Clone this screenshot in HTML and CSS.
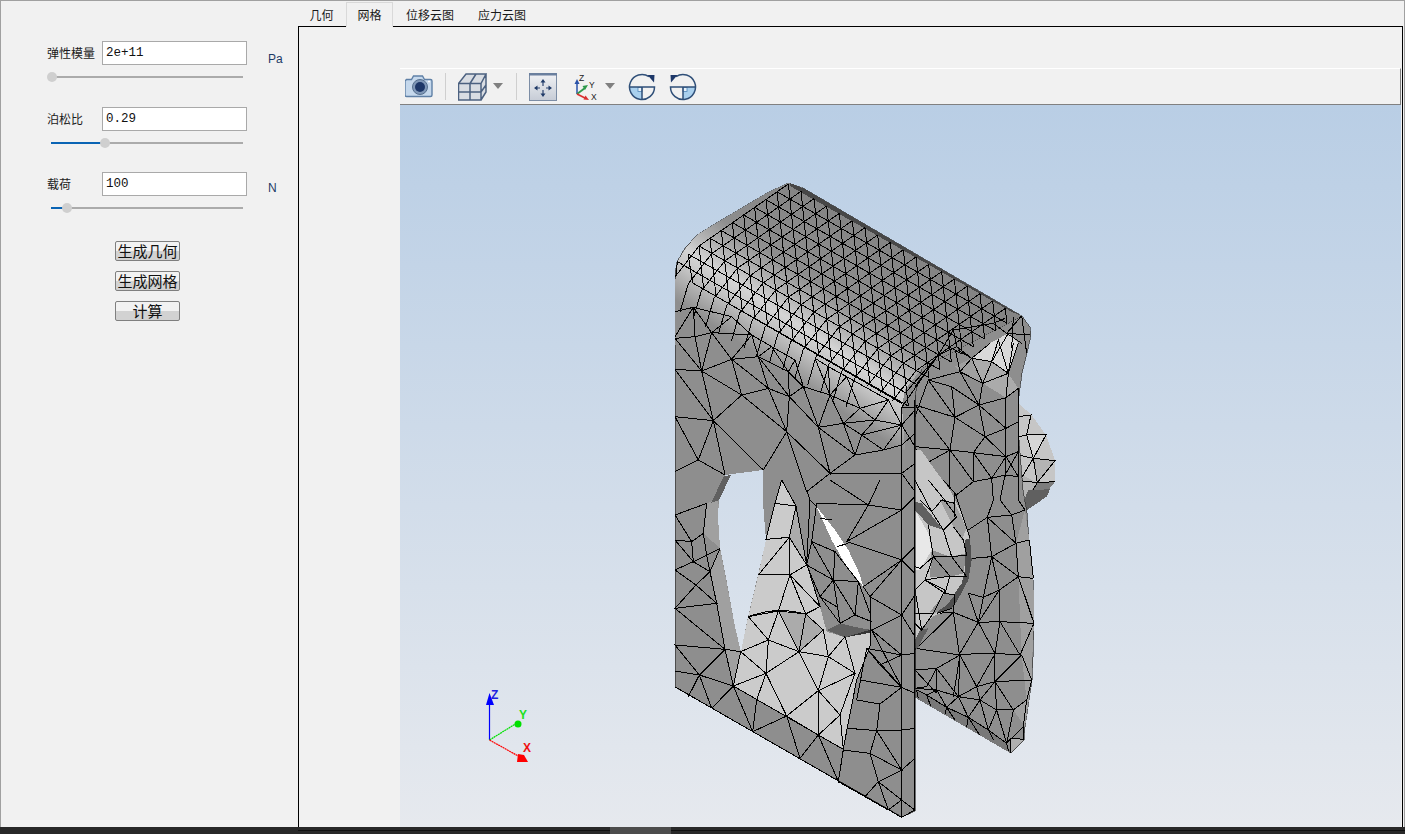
FILE: index.html
```html
<!DOCTYPE html>
<html lang="zh">
<head>
<meta charset="utf-8">
<title>有限元分析</title>
<link rel="stylesheet" href="styles.css">
</head>
<body>
<div class="app">
  <div class="main">
    <aside class="sidebar">
      <div class="fields">
        <div class="field">
          <label class="field-label">弹性模量</label>
          <input class="field-input" value="2e+11">
          <span class="spacer"></span>
          <span class="unit-text unit-text-low">Pa</span>
          <div class="slider"><span class="slider-fill" style="width:1px"></span><span class="slider-thumb"></span><span class="slider-rest"></span></div>
        </div>
        <div class="field">
          <label class="field-label">泊松比</label>
          <input class="field-input" value="0.29">
          <span class="spacer"></span>
          <span class="unit-text"></span>
          <div class="slider"><span class="slider-fill" style="width:54px"></span><span class="slider-thumb"></span><span class="slider-rest"></span></div>
        </div>
        <div class="field">
          <label class="field-label">载荷</label>
          <input class="field-input" value="100">
          <span class="spacer"></span>
          <span class="unit-text">N</span>
          <div class="slider"><span class="slider-fill" style="width:16px"></span><span class="slider-thumb"></span><span class="slider-rest"></span></div>
        </div>
      </div>
      <div class="actions">
        <button class="action">生成几何</button>
        <button class="action">生成网格</button>
        <button class="action">计算</button>
      </div>
    </aside>
    <section class="workspace">
      <nav class="tabs">
        <span class="tab">几何</span>
        <span class="tab tab-active">网格</span>
        <span class="tab">位移云图</span>
        <span class="tab">应力云图</span>
      </nav>
      <div class="pane">
        <div class="viewer">
          <div class="toolbar">
            <svg class="tool tool-camera" width="28" height="24" viewBox="405 75 28 24">
              <path d="M406.500 79.500h5l2-3.500h9l2 3.500h6a1.500 1.500 0 0 1 1.500 1.500v14a1.500 1.500 0 0 1-1.500 1.500h-24a1.500 1.500 0 0 1-1.500-1.500v-14z" fill="#c5d8ec" stroke="#5f80a6" stroke-width="1.400"/>
              <circle cx="420" cy="87" r="7.500" fill="#8098b8" stroke="#56708f"/>
              <circle cx="420" cy="87" r="5" fill="#1d3768"/>
              <circle cx="429" cy="81.500" r="1" fill="#fff"/>
            </svg>
            <span class="tool-sep"></span>
            <svg class="tool tool-cube" width="29" height="28" viewBox="458 73 29 28">
              <path d="M466 74h20v18l-5 8h-22.500v-17z" fill="#d9dde3"/>
              <path d="M458.500 83.500h22.500v16.500h-22.500zM458.500 83.500l7.500-9.500h20l-5 9.500M481 100l5-8v-18M470 83.500v16.500M458.500 92h22.500l5-7M476 74l-6 9.500" fill="none" stroke="#4c6180" stroke-width="1.500"/>
            </svg>
            <span class="caret"></span>
            <span class="tool-sep tool-sep-b"></span>
            <svg class="tool tool-fit" width="28" height="28" viewBox="529 72 28 28">
              <defs><linearGradient id="fitg" x1="0" y1="0" x2="0" y2="1"><stop offset="0" stop-color="#f1f2f5"/><stop offset="1" stop-color="#c6ccd6"/></linearGradient></defs>
              <rect x="529.500" y="72.500" width="27" height="27" fill="url(#fitg)" stroke="#7c8da5"/>
              <rect x="529" y="72" width="28" height="2.500" fill="#6a7f9e"/>
              <path d="M543 81v4M543 89v4M536 87h4M546 87h4" stroke="#2c4470" stroke-width="1.200"/>
              <path d="M543 78l-2.500 3.500h5zM543 96l-2.500-3.500h5zM534 87l3.500-2.500v5zM552 87l-3.500-2.500v5z" fill="#1f3a68"/>
            </svg>
            <svg class="tool tool-axis" width="26" height="28" viewBox="573 72 26 28">
              <path d="M577 93v-13" stroke="#2a52a8" stroke-width="1.500"/>
              <path d="M577 78l-2.500 5h5z" fill="#2a52a8"/>
              <path d="M577 93l8-6" stroke="#2e9a4c" stroke-width="1.800"/>
              <path d="M588 84l-5.500 1 2.500 4z" fill="#2e9a4c"/>
              <path d="M577 93l8 4" stroke="#d93030" stroke-width="1.800"/>
              <path d="M589 99l-5.500-.500 2-4z" fill="#d93030"/>
              <text class="axis-mini" x="579" y="79.500">Z</text>
              <text class="axis-mini" x="589" y="87">Y</text>
              <text class="axis-mini" x="591" y="98.500">X</text>
            </svg>
            <span class="caret caret-b"></span>
            <svg class="tool tool-rot" width="28" height="28" viewBox="629 72 28 28">
              <path d="M643 86H630.500A12.500 12.500 0 0 0 643 98.500Z" fill="#a9d0ee"/>
              <rect x="639" y="86.500" width="4" height="4" fill="#e8f2fa" stroke="#4f86b8" stroke-width=".8"/>
              <path d="M650 75.700A12.500 12.500 0 1 0 655.500 86H630.500M643 86V98.500" fill="none" stroke="#2f4f78" stroke-width="1.500"/>
              <path d="M648.500 74L655.500 74L655 81.500Z" fill="#1d3768"/>
            </svg>
            <svg class="tool tool-rot-b" width="28" height="28" viewBox="670 72 28 28">
              <path d="M684 86H696.500A12.500 12.500 0 0 1 684 98.500Z" fill="#a9d0ee"/>
              <rect x="684" y="86.500" width="4" height="4" fill="#e8f2fa" stroke="#4f86b8" stroke-width=".8"/>
              <path d="M677 75.700A12.500 12.500 0 1 1 671.500 86H696.500M684 86V98.500" fill="none" stroke="#2f4f78" stroke-width="1.500"/>
              <path d="M678.500 74L671.500 74L672 81.500Z" fill="#1d3768"/>
            </svg>
          </div>
          <div class="canvas">
            <svg class="scene" viewBox="400 105 1001 722" preserveAspectRatio="none">
              <defs>
                <linearGradient id="bg" gradientUnits="userSpaceOnUse" x1="0" y1="105" x2="0" y2="827">
                  <stop offset="0" stop-color="#b9cee5"/>
                  <stop offset="1" stop-color="#e6e9ee"/>
                </linearGradient>
                <linearGradient id="band" gradientUnits="userSpaceOnUse" x1="788" y1="183" x2="699" y2="316">
                  <stop offset="0" stop-color="#848484"/>
                  <stop offset=".42" stop-color="#8e8e8e"/>
                  <stop offset=".58" stop-color="#b4b4b4"/>
                  <stop offset=".7" stop-color="#d4d4d4"/>
                  <stop offset=".8" stop-color="#c4c4c4"/>
                  <stop offset="1" stop-color="#8e8e8e"/>
                </linearGradient>
              </defs>

              <!-- back bulge -->
              <g transform="translate(900 300) scale(.33333)">
                <path class="f-light" d="M355 310L395 345L438 405L465 480L465 545L430 590L370 600L355 560Z"/>
                <path class="f-pale" d="M380 405L438 405L400 475Z"/>
                <path class="f-mid" d="M400 475L465 482L412 548ZM355 520L412 548L375 598Z"/>
                <path class="f-dim" d="M412 548L465 545L430 590L375 598Z"/>
                <path class="mesh" d="M355 350L393 345L380 405L438 405L400 475L465 482L412 548L465 545M380 405L400 475L355 465M393 345L380 405L355 410M400 475L412 548L360 542L400 475M412 548L380 600"/>
              </g>
              <g transform="translate(900 480) scale(.33333)">
                <path class="f-dark" d="M450 28L440 50L378 92L368 70L385 30Z"/>
              </g>

              <!-- back plate -->
              <path class="f-base edge" d="M905 372L1022 316L1030 327L1031 335L1027 353L1022 373L1018 403L1019 440L1023 490L1027 513L1029 540L1033 580L1034 623L1033 657L1032 680L1025 727L1024 740L1011 753L915 697L915 395Z"/>
              <g transform="translate(900 480) scale(.33333)">
                <path class="f-mid2" d="M375 90L388 180L400 295L402 430L395 540L365 525L355 290L348 190Z"/>
                <path class="mesh" d="M280 60L262 112M300 60L335 105M355 60L375 90M262 112L335 105L375 90M262 112L205 150M262 112L275 230M262 112L348 190L388 180M275 230L348 190M335 105L348 190M275 230L355 290L400 295M348 190L355 290M388 180L400 295M275 230L298 330L355 290M355 290L402 430M298 330L235 427L300 425L402 430M298 330L300 425M250 352L235 427M250 352L298 330M250 352L205 340M205 340L235 427M235 427L178 523L285 520L360 525L395 530M235 427L285 520M300 425L285 520M300 425L360 525M402 430L360 525M235 427L160 397L178 523M160 397L45 510M160 397L110 400M275 230L215 235M275 230L250 352"/>
              </g>
              <g transform="translate(660 480) scale(.33333)">
                <path class="f-mid2" d="M1085 525L1120 435L1115 600L1095 740L1060 690L1100 660Z"/>
                <path class="f-shade" d="M765 625L800 645L860 682L925 712L985 750L1040 790L1052 820L765 651Z"/>
                <path class="f-tip" d="M1052 775L1092 778L1052 820Z"/>
                <path class="mesh" d="M900 525L830 565M900 525L765 505M1085 525L1115 600M1005 522L1005 605M1085 525L1005 605L1115 600M900 525L950 620M900 525L895 650M900 525L880 650M830 565L895 650M830 565L830 640M830 565L765 570L830 640M830 565L800 620M895 650L950 620L1005 605M1005 522L950 620L960 660L895 650M960 660L1005 605L1060 690M770 630L800 645L830 630L860 682L895 650L925 712L960 660L985 750L1010 690L1040 790L1060 690L1100 660L1115 600M765 625L830 630L895 650L960 660L1010 690L1060 690M1005 605L1010 690M800 645L860 682L925 712L985 750L1040 790M800 645L812 678M860 682L855 702M860 682L885 720M925 712L920 740M925 712L958 764M985 750L1000 780M1040 790L1045 812M1040 790L1052 775L1092 778M1052 775L1052 820M1100 660L1090 740L1040 790M1090 740L1092 778M765 625L800 620M770 630L775 655"/>
              </g>

              <!-- flange -->
              <g transform="translate(900 300) scale(.33333)">
                <path class="f-vivid" d="M215 175L270 130L325 100L355 130L325 220L275 185Z"/>
                <path class="f-soft" d="M215 175L275 185L325 220L355 265L318 293L248 250Z"/>
                <path class="f-mid2" d="M165 200L215 175L248 250L180 215Z"/>
                <path class="mesh" d="M215 175L275 185L325 220M215 175L270 130M275 185L295 120L325 220M275 185L325 100M325 220L355 130M325 220L340 130M215 175L248 250L325 220M248 250L275 185M180 215L215 175M180 215L248 250M248 250L237 315M180 215L237 315M180 215L165 145M165 145L215 175M45 315L165 352L237 315L318 293L355 265M318 293L325 220M318 293L318 530M237 315L255 410L318 385L318 293M165 352L255 410L220 458L150 450L165 352M45 315L150 450M45 350L85 240L165 352M85 240L155 260L165 352M85 240L180 215M155 260L237 315M237 315L318 385M255 410L318 470L275 535L220 458M220 458L318 470M150 450L45 440M150 450L220 545M220 458L220 545L275 535L315 525L355 455L318 470M318 385L355 365M318 470L355 530M315 525L355 530M355 265L355 600M150 450L150 600M220 545L150 600M275 535L280 600M315 525L300 600M45 440L70 495M70 495L150 450"/>
              </g>

              <!-- interior seen through the back plate opening -->
              <path class="f-light" d="M915 450L921 450L935 470L950 490L960 510L967 527L971 550L968 577L957 600L943 612L932 617L920 630L915 643Z"/>
              <g transform="translate(900 480) scale(.33333)">
                <path class="f-white" d="M45 90L85 160L95 210L60 270L45 270Z"/>
                <path class="f-dark" d="M45 65L65 70L130 150L85 135L45 90Z"/>
                <path class="f-mid2" d="M120 60L165 70L200 145L185 180L160 140Z"/>
                <path class="f-base" d="M95 210L150 230L200 220L190 280L150 290L90 290Z"/>
                <path class="f-darker" d="M195 180L210 175L215 240L205 300L170 365L155 385L110 400L150 360L185 310L195 270Z"/>
                <path class="f-dark" d="M45 480L60 450L85 445L50 510Z"/>
                <path class="f-base" d="M135 340L165 345L140 375L105 400L90 395Z"/>
                <path class="mesh" d="M85 0L130 55L95 95L45 0M130 55L170 110L130 150L95 95M130 0L165 40L200 145L210 175M95 95L60 60M120 60L165 70M165 40L165 110M130 150L155 230L100 230M85 135L100 230L60 265L45 260M155 230L200 225L190 180L160 140M100 230L75 300L45 330M100 230L150 288L75 300M150 288L200 290L155 230M150 288L135 340L75 300M75 300L135 330L100 400M135 340L165 345L160 397M45 400L100 400L65 450L45 430M45 330L65 450M155 385L110 400"/>
              </g>

              <!-- front plate -->
              <path class="f-base edge" d="M675 687L675 273L677 262L685 248L697 235L713 225L767 193L788 183L803 188L1022 316L922 368L915 395L915 811L902 817Z"/>
              <path class="f-band" d="M675 285L677 262L686 248L697 235L713 225L767 193L788 183L803 188L1022 316L922 368L905 390L902 407L905 450L840 450L675 345Z"/>
              <path class="f-rim" d="M790 183L805 189L1022 316L1012 312L790 186Z"/>

              <!-- top surface mesh -->
              <g transform="translate(660 170) scale(.33333)">
                <path class="mesh" d="M351 65L1041 460M318 89L1008 483M284 112L974 507M251 135L940 530M217 158L907 553M184 182L874 576M150 205L840 599M117 228L807 623M84 252L774 646M52 275L740 670M100 340L745 708M170 380L725 700"/>
                <path class="mesh" d="M385 42L117 228L47 318M423 64L155 251L85 341L60 426M462 86L194 273L124 363L99 448M500 108L232 295L162 385L137 470M538 130L270 317L200 407L175 492M577 152L309 339L239 429L214 514M615 173L347 360L277 450L252 535M653 195L385 382L315 472L290 557M691 217L423 404L353 494L328 579M730 239L462 426L392 516L367 601M768 261L500 448L430 538L405 623M806 283L538 470L468 560L443 645M845 305L577 492L507 582L482 667M883 327L615 514L545 604L520 689M921 349L653 536L583 626L558 711M960 371L692 558L622 648M998 393L730 580L660 670M1036 415L768 602L698 692"/>
                <path class="mesh" d="M150 205L168 378M117 228L131 357M84 252L98 339M52 275L48 320M184 182L194 272M217 158L231 294M251 135L270 316M284 112L308 338M318 89L347 360M351 65L385 381M385 42L423 404M423 64L461 425M462 86L500 448M500 108L538 470M538 130L576 491M577 152L615 513M615 173L653 534M653 195L691 556M691 217L729 578M730 239L768 600M768 261L806 622M806 283L840 599M845 305L874 576M883 327L907 553M921 349L940 530M960 371L974 507M998 393L1008 483M1036 415L1041 460"/>
                <path class="mesh" d="M194 272L209 402M232 294L247 424M270 316L285 446M308 338L323 468M347 360L362 490M385 382L400 512M423 404L438 534M461 425L476 555M500 448L515 578M538 470L553 600M576 491L591 621M615 513L630 643M653 534L668 664M691 556L706 686M730 578L745 708"/>
                <path class="mesh" d="M1085 437L1040 490L1060 470M1040 490L1110 495M1060 440L1055 535M1085 437L1100 550M1040 490L1085 520M1000 460L1040 490M1000 460L1035 445M1000 460L880 480M880 480L835 555M880 480L890 530M835 555L890 530M890 530L935 565M835 555L765 650M835 555L735 670M725 712L835 555M725 712L765 712"/>
                <path class="mesh" d="M725 712L725 990M765 690L765 990M725 765L765 720M725 765L765 830M725 825L765 790M725 910L765 880M725 910L765 965"/>
                <path class="mesh" d="M100 412L155 488L105 500L100 412M100 412L45 425M45 505L105 500L125 603M45 505L125 603M45 598L125 603M155 488L125 603M155 488L215 568L125 603M125 603L245 675L215 568M125 603L160 752L245 675M45 598L160 752M45 740L160 752L115 870L45 740M115 870L45 905M115 870L195 915M160 752L195 915M160 752L310 900M245 675L380 785M380 785L310 900M245 675L325 655L380 785M325 655L388 680L380 785M215 568L325 655M295 560L325 655M295 560L388 680M215 568L295 560L275 495L215 568M155 488L215 440L275 495L155 488M100 412L215 440M275 495L335 530L295 560M335 530L385 605L295 560M385 605L388 680M385 605L430 650L388 680M430 650L475 772L388 680M430 650L510 675L475 772M510 675L550 760L475 772M550 760L645 750M510 675L600 715L550 760M600 715L645 750L685 690L600 715M685 690L725 765L645 750L605 795L550 760M605 795L725 765M605 795L585 855M605 795L670 840L725 825M670 840L585 855M725 765L670 840M585 855L510 910M550 760L585 855M475 772L585 855M475 772L510 910L380 785M380 785L440 965L510 910M510 910L725 910M335 530L405 570L430 650M405 570L385 605M465 565L505 590L510 675L465 565M505 590L560 620L600 715M560 620L510 675M560 620L685 690M45 500L100 412"/>
              </g>

              <!-- front plate lower: light interior, hole -->
              <g transform="translate(660 480) scale(.33333)">
                <path class="f-light2" d="M365 0L408 78L440 250L480 380L500 455L555 472L632 455L630 500L590 600L550 805L475 765L220 618L242 515L265 410L295 285L318 180L345 70Z"/>
                <path class="f-soft" d="M408 78L440 250L388 172Z"/>
                <path class="f-mid2" d="M140 70L175 55L180 205L130 160Z"/>
                <path class="f-mid2" d="M180 205L222 425L170 370L150 275Z"/>
                <path class="f-mid2" d="M170 370L222 425L242 515L195 508Z"/>
                <path class="f-mid2" d="M195 508L242 515L220 618Z"/>
                <path class="f-soft" d="M355 393L437 402L490 450L417 515Z"/>
              </g>
              <path class="f-hole" d="M725 475L763 470L763 503L766 540L758 575L748 617L741 652L735 627L727 583L720 547L718 517L719 500L723 490Z"/>
              <path class="f-dark" d="M711 503L724 476L731 475L719 500Z"/>
              <g transform="translate(660 480) scale(.33333)">
                <path class="f-paper" d="M470 80L525 150L565 210L598 280L610 320L560 260L515 180Z"/>
                <path class="f-dark" d="M500 450L540 430L580 440L635 450L555 472Z"/>
                <path class="f-black" d="M555 472L635 448L632 458Z"/>
                <path class="mesh" d="M140 70L45 105L95 185L130 160L140 70M45 180L95 185L100 245L45 180M100 245L140 225L130 160M140 225L150 275L100 245L45 270L108 315L150 275M108 315L45 385L170 370L108 315M150 275L170 370M150 275L180 205M140 225L180 205M45 385L195 508L170 370M195 508L45 495L118 585L195 508M118 585L45 573M118 585L220 618L155 685M118 585L155 685M118 585L85 650M195 508L220 618M195 508L242 515M278 755L220 618M290 660L278 755L380 708L420 835L475 765L535 905L550 808M380 708L475 765"/>
                <path class="mesh" d="M408 78L345 70L318 178L388 172L295 285L390 285L355 393L265 410L325 480L355 393L417 515L325 480L242 515L318 580L325 480M417 515L318 580L220 618M318 580L290 660M318 580L380 708M417 515L475 632L505 530L417 515L490 450L505 530L555 470L585 580L505 530M475 632L585 580L540 705L475 765L475 632L380 708M475 632L540 705L550 808M408 78L388 172L440 255L408 78M390 285L440 255M388 172L390 285M390 285L437 402L355 393M437 402L417 515M437 402L480 380L390 285M437 402L490 450M220 618L475 765L550 808M242 515L220 618M365 0L408 78M345 70L365 0M265 410C320 390 370 385 437 402"/>
                <path class="mesh" d="M455 185L440 255L520 300L455 185L525 215L520 300L480 350L440 255M520 300L595 305L585 405L520 300M595 305L630 400M585 405L635 425M585 405L540 430L480 350L530 380M520 300L540 430M455 185L470 70M440 30L450 60L440 250L480 380M480 115L515 120M530 200L565 190M450 60L470 80M525 215L595 305"/>
                <path class="mesh" d="M625 75L725 90L560 185L725 240L610 320M625 75L560 185M625 75L660 0M625 75L510 0M625 75L470 70M725 240L630 350L725 405L635 450L725 622L620 505L725 525L660 555L725 622M620 505L660 555M600 600L725 622L660 672L590 660L620 505M660 672L650 752L725 750M650 752L725 870L630 820L550 810L535 905L615 950L655 905L630 820M565 745L650 752L630 820M725 870L655 905L685 990M655 905L725 960L685 990L615 950M725 525L635 450M630 500L590 600L550 805M610 320L630 350L632 455L630 500"/>
                <path class="mesh" d="M725 0L725 1012M765 0L765 990M725 90L765 50M725 240L765 200M725 240L765 280M725 405L765 345M725 405L765 470M725 525L765 520M725 622L765 640M725 750L765 745M725 870L765 835M725 960L765 990M725 1012L765 990M44 620L725 1012"/>
              </g>

              <!-- orientation triad -->
              <g class="triad">
                <path class="triad-z" d="M489.500 740V700"/>
                <path class="triad-zh" d="M489.500 693L486 705H494Z"/>
                <text class="triad-label triad-lz" x="491" y="699">Z</text>
                <path class="triad-y" d="M489.500 740L517 723"/>
                <circle class="triad-yh" cx="518" cy="724" r="3.500"/>
                <text class="triad-label triad-ly" x="519" y="719">Y</text>
                <path class="triad-x" d="M489.500 740L520 757"/>
                <path class="triad-xh" d="M528 762L517 762L518 754L524 755Z"/>
                <text class="triad-label triad-lx" x="523" y="752">X</text>
              </g>
            </svg>
          </div>
        </div>
      </div>
    </section>
  </div>
  <div class="statusbar"><span class="statusbar-thumb"></span></div>
</div>
</body>
</html>
```

FILE: styles.css
```css
* { box-sizing: border-box; }
html, body { margin: 0; padding: 0; height: 100%; overflow: hidden; }
body { background: #f1f1f1; font-family: "Noto Sans CJK SC", "Liberation Sans", sans-serif; font-size: 12px; color: #1a1a1a; }

.app { height: 834px; width: 1405px; display: flex; flex-direction: column; border-top: 1px solid #a0a0a0; border-left: 1px solid #a0a0a0; border-right: 1px solid #a0a0a0; }
.main { flex: 1; display: flex; min-height: 0; }

.sidebar { width: 297px; flex: none; padding: 40px 0 0 46px; display: flex; flex-direction: column; }
.fields { display: flex; flex-direction: column; gap: 24.5px; width: 240px; }
.field { display: grid; grid-template-columns: 55px 145px 21px auto; grid-template-rows: 24px 10px; row-gap: 7px; align-items: center; }
.field-label { line-height: 24px; white-space: nowrap; font-size: 12px; }
.field-input { width: 145px; height: 24px; border: 1px solid #a9a9a9; background: #fff; padding: 0 3px; font-family: "Liberation Mono", monospace; font-size: 12.5px; color: #111; outline: none; }
.unit-text { font-family: "Liberation Sans", sans-serif; font-size: 12px; line-height: 14px; color: #1d3a66; margin-top: 8px; white-space: nowrap; }
.unit-text-low { margin-top: 11px; }

.slider { grid-column: 1 / span 2; display: flex; align-items: center; height: 10px; margin-left: 4px; width: 192px; }
.slider-fill { height: 2px; background: #0a64b4; flex: none; }
.slider-thumb { width: 10px; height: 10px; border-radius: 50%; background: #cfcfcf; flex: none; margin-left: -5px; margin-right: -5px; position: relative; }
.slider-rest { flex: 1; height: 2px; background: #ababab; }

.actions { margin: 28px 0 0 68px; display: flex; flex-direction: column; gap: 10px; align-items: flex-start; }
.action { width: 65px; height: 20px; padding: 0; border: 1px solid #7f7f7f; border-radius: 2px; background: linear-gradient(#f2f2f2 0, #f2f2f2 50%, #d2d2d2 50%, #d2d2d2 100%); font-family: "Noto Sans CJK SC", sans-serif; font-size: 15px; line-height: 18px; color: #111; }

.workspace { flex: 1; min-width: 0; display: flex; flex-direction: column; margin-right: 1px; }
.tabs { height: 25px; flex: none; display: flex; align-items: flex-end; }
.tab { width: 47px; height: 24px; line-height: 25px; text-align: center; font-size: 12px; color: #1a1a1a; flex: none; }
.tab:nth-child(n+3) { width: 72px; }
.tab:nth-child(3) { margin-left: 1px; }
.tab-active { border: 1px solid #d9d9d9; border-bottom: 1px solid #f1f1f1; position: relative; margin-left: 1px; margin-bottom: -1px; height: 25px; line-height: 23px; }

.pane { flex: 1; min-height: 0; border: 1px solid #000; border-bottom: none; display: flex; padding: 41px 1px 0 101px; }
.viewer { flex: 1; min-width: 0; display: flex; flex-direction: column; }
.toolbar { height: 37px; flex: none; background: #f1f1f1; border-top: 1px solid #fff; border-right: 1px solid #808080; border-bottom: 1px solid #808080; display: flex; align-items: center; padding-left: 5px; }
.tool { flex: none; display: block; }
.tool-sep { width: 1px; height: 27px; background: #cfcfcf; margin-left: 12px; flex: none; }
.tool-cube { margin-left: 12px; margin-top: 1px; }
.caret { width: 0; height: 0; border-left: 5.5px solid transparent; border-right: 5.5px solid transparent; border-top: 6px solid #808080; margin-left: 6px; flex: none; margin-top: -2px; }
.tool-sep-b { margin-left: 13px; }
.tool-fit { margin-left: 12px; }
.tool-axis { margin-left: 16px; }
.caret-b { margin-left: 6px; }
.tool-rot { margin-left: 13px; }
.tool-rot-b { margin-left: 13px; }
.axis-mini { font-family: "Liberation Sans", sans-serif; font-size: 8.5px; fill: #222; }

.canvas { flex: 1; min-height: 0; background: linear-gradient(#b9cee5, #e6e9ee); }
.scene { display: block; width: 100%; height: 100%; shape-rendering: crispEdges; }

.mesh { fill: none; stroke: #000; stroke-width: 1; vector-effect: non-scaling-stroke; }
.edge { stroke: #222; stroke-width: .6; }
.f-base { fill: #8e8e8e; }
.f-band { fill: url(#band); }
.f-hole { fill: url(#bg); }
.f-rim { fill: #474747; }
.f-light { fill: #c6c6c6; }
.f-light2 { fill: #cbcbcb; }
.f-pale { fill: #d6d6d6; }
.f-vivid { fill: #d9d9d9; }
.f-white { fill: #e8e8e8; }
.f-paper { fill: #fff; }
.f-soft { fill: #ababab; }
.f-mid { fill: #b4b4b4; }
.f-mid2 { fill: #a0a0a0; }
.f-dim { fill: #7d7d7d; }
.f-shade { fill: #787878; }
.f-tip { fill: #b0b0b0; }
.f-dark { fill: #606060; }
.f-darker { fill: #4f4f4f; }
.f-black { fill: #333; }

.triad path, .triad circle { shape-rendering: auto; }
.triad-z { stroke: #0000ff; stroke-width: 1.200; fill: none; }
.triad-zh { fill: #0000ff; }
.triad-y { stroke: #00e000; stroke-width: 1.200; stroke-dasharray: 2 .5; fill: none; }
.triad-yh { fill: #00e000; }
.triad-x { stroke: #ff0000; stroke-width: 1.200; stroke-dasharray: 2 .5; fill: none; }
.triad-xh { fill: #ff0000; }
.triad-label { font-family: "Liberation Sans", sans-serif; font-weight: 700; font-size: 12px; }
.triad-lz { fill: #2020e0; }
.triad-ly { fill: #20e020; }
.triad-lx { fill: #f01010; }

.statusbar { height: 7px; flex: none; margin-left: -1px; margin-right: -1px; background: linear-gradient(#101010, #101010) 298px 3px / 100% 1px no-repeat, #282828; display: flex; }
.statusbar-thumb { width: 61px; margin-left: 610px; background: #4c4c4c; }
```
